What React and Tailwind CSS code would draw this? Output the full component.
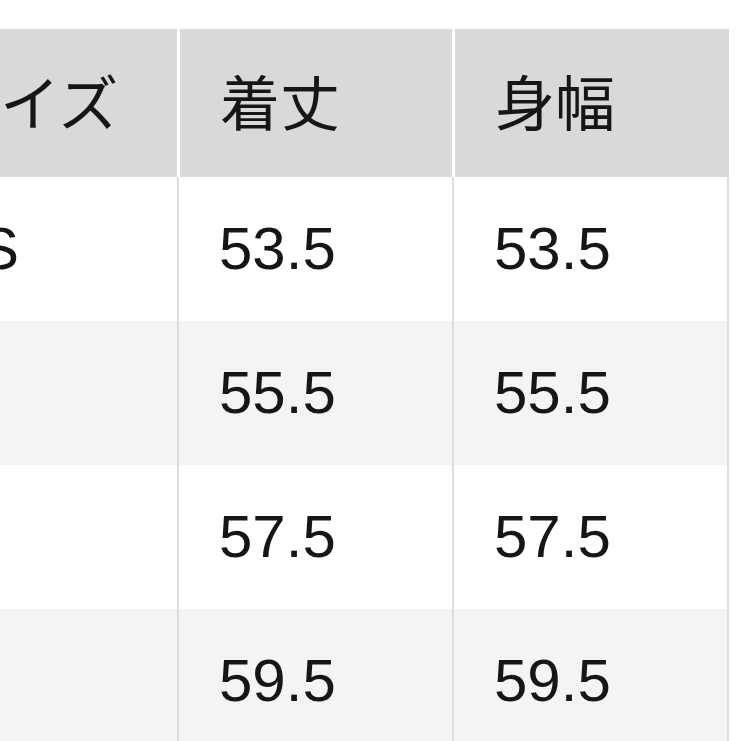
const rows = [
  { size: "XS", length: "53.5", width: "53.5" },
  { size: "S", length: "55.5", width: "55.5" },
  { size: "M", length: "57.5", width: "57.5" },
  { size: "L", length: "59.5", width: "59.5" },
];

function Cell({ children, className }) {
  return (
    <div className={`shrink-0 flex items-center ${className}`}>
      {children}
    </div>
  );
}

export default function App() {
  return (
    <div
      className="w-[741px] h-[741px] overflow-hidden bg-white pt-[29px] text-[60px] leading-none text-[#161616]"
      style={{ fontFamily: '"Liberation Sans", "Noto Sans CJK JP", sans-serif' }}
    >
      <div className="ml-[-95px]">
        <div className="flex h-[148px]">
          <Cell className="w-[275px] pt-[6px] pl-[35px] bg-[#d9d9d9] border-r-[3px] border-white">サイズ</Cell>
          <Cell className="w-[275px] pt-[6px] pl-[40px] bg-[#d9d9d9] border-r-[3px] border-white">着丈</Cell>
          <Cell className="w-[274px] pt-[6px] pl-[40px] bg-[#d9d9d9]">身幅</Cell>
        </div>
        {rows.map((r, i) => {
          const bg = i % 2 ? "bg-[#f4f4f4]" : "bg-white";
          return (
            <div key={r.size} className="flex h-[144px]">
              <Cell className={`w-[274px] pl-[34px] border-r-2 border-[#dcdcdc] ${bg}`}>{r.size}</Cell>
              <Cell className={`w-[275px] pl-[40px] border-r-2 border-[#dcdcdc] ${bg}`}>{r.length}</Cell>
              <Cell className={`w-[275px] pl-[40px] border-r-2 border-[#dcdcdc] ${bg}`}>{r.width}</Cell>
            </div>
          );
        })}
      </div>
    </div>
  );
}
